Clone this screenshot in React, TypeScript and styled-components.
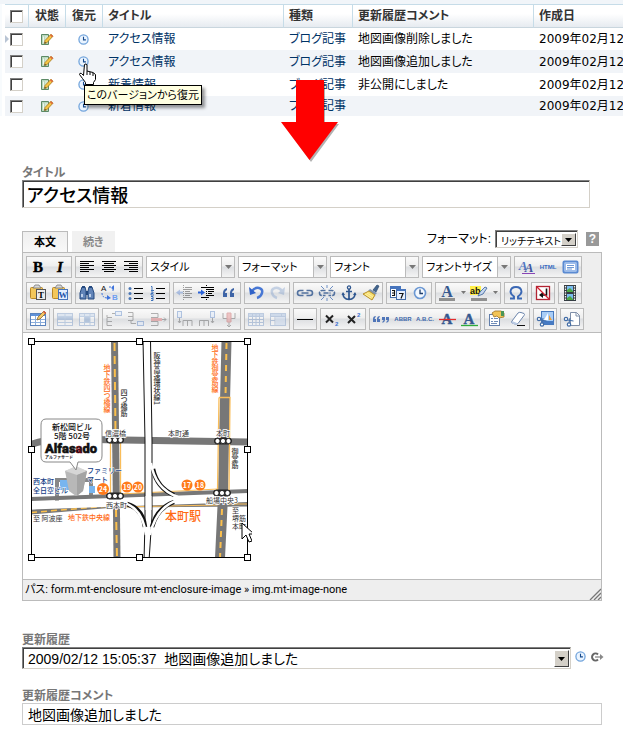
import React from "react";
import styled, { createGlobalStyle, css } from "styled-components";

const Global = createGlobalStyle`
  * { box-sizing: border-box; }
  body {
    margin: 0;
    background: #fff;
    color: #000;
    font-family: "Liberation Sans", "Noto Sans CJK JP", sans-serif;
    font-size: 12px;
    font-feature-settings: "palt";
  }
  button, input, select { font: inherit; font-feature-settings: inherit; color: inherit; margin: 0; }
  button { padding: 0; border: 0; background: none; cursor: pointer; }
`;

const Page = styled.div`
  overflow-x: hidden;
  padding-bottom: 20px;
`;

/* ---------- revision list ---------- */

const Listing = styled.section`
  position: relative;
  padding: 4px 0 0 5px;
  background:
    linear-gradient(#f1f5f9, #f1f5f9) top / 100% 4px no-repeat,
    linear-gradient(#f8fbfd, #f8fbfd) left / 2px 100% no-repeat;
`;

const Table = styled.table`
  width: 100%;
  table-layout: fixed;
  border-collapse: separate;
  border-spacing: 0;
  line-height: 16px;
  white-space: nowrap;
`;

const Col = styled.col<{ $w?: number }>`
  ${(p) => p.$w && css`width: ${p.$w}px;`}
`;

const Th = styled.th<{ $center?: boolean }>`
  height: 24px;
  padding: 0 0 0 5px;
  border-top: 1px solid #c6dce8;
  border-bottom: 1px solid #c9d6de;
  border-left: 1px solid #c6dce8;
  background: linear-gradient(#fff, #fff 40%, #e6ebf0);
  color: #333;
  font-weight: bold;
  text-align: ${(p) => (p.$center ? "center" : "left")};
  ${(p) => p.$center && css`padding: 0;`}
  &:first-child { border-left: 0; }
`;

const Tr = styled.tr`
  height: 23px;
  &:nth-child(even) { background: #f1f4f8; }
  &:first-child { height: 22px; }
  &:last-child { height: 20px; }
`;

const Td = styled.td<{ $center?: boolean; $date?: boolean }>`
  position: relative;
  padding: 0 0 0 ${(p) => (p.$center ? 0 : 6)}px;
  overflow: hidden;
  text-align: ${(p) => (p.$center ? "center" : "left")};
  ${(p) => p.$date && css`font-family: "DejaVu Sans", "Noto Sans CJK JP", sans-serif;`}
  svg { display: block; margin: 0 auto; }
`;

const Check = styled.input`
  appearance: none;
  display: block;
  width: 13px;
  height: 13px;
  margin: 0 auto;
  border: 1px solid;
  border-color: #808080 #d4d0c8 #d4d0c8 #808080;
  background: #fff;
  box-shadow: inset 1px 1px 0 #404040;
`;

const RowMark = styled.svg`
  position: absolute;
  left: 0;
  top: 7px;
`;

const Link = styled.a`
  color: #036;
  text-decoration: none;
`;

const IconButton = styled.button`
  display: block;
  margin: 0 auto;
`;

const Tooltip = styled.div`
  position: absolute;
  left: 84px;
  top: 85px;
  padding: 1px 2px;
  border: 1px solid #000;
  background: #ffffe1;
  box-shadow: 3px 3px 3px rgba(0, 0, 0, 0.4);
  font-size: 11px;
  line-height: 16px;
  white-space: nowrap;
`;

const Hand = styled.svg`
  position: absolute;
  left: 78px;
  top: 63px;
`;

const BigArrow = styled.svg`
  position: absolute;
  left: 276px;
  top: 75px;
`;

/* ---------- form ---------- */

const Form = styled.form`
  padding: 50px 21px 0 22px;
`;

const Label = styled.label`
  display: block;
  color: #777;
  font-weight: bold;
  line-height: 14px;
`;

const sunken = css`
  border: 1px solid;
  border-color: #808080 #d4d0c8 #d4d0c8 #808080;
  box-shadow: inset 1px 1px 0 #404040;
  background: #fff;
`;

const TitleBox = styled.div`
  padding-right: 12px;
`;

const TitleInput = styled.input`
  ${sunken}
  display: block;
  width: 100%;
  height: 28px;
  padding: 0 4px;
  font-size: 18px;
  font-weight: 500;
`;

const TabRow = styled.div`
  display: flex;
  align-items: flex-end;
  gap: 4px;
  margin-top: 22px;
  height: 22px;
`;

const Tab = styled.button<{ $active?: boolean }>`
  height: 21px;
  padding: 0 10px;
  border: 1px solid #f1f1f1;
  border-bottom: 0;
  background: #f1f1f1;
  color: #888;
  font-size: 11px;
  font-weight: bold;
  line-height: 20px;
  ${(p) => p.$active && css`
    padding: 0 11px;
    border-color: #bbb;
    background: linear-gradient(#efefef, #f8f8f8);
    color: #000;
  `}
`;

const FormatBox = styled.div`
  display: flex;
  align-items: center;
  gap: 4px;
  margin: 0 3px 4px auto;
  line-height: 18px;
`;

const SelectBox = styled.div<{ $w?: number }>`
  ${sunken}
  display: flex;
  align-items: center;
  padding: 2px 1px 1px 2px;
  ${(p) => (p.$w
    ? css`width: ${p.$w}px; height: 18px; font-size: 10px;`
    : css`flex: 1; height: 22px; font-size: 14px;`)}
`;

const BareSelect = styled.select`
  appearance: none;
  flex: 1;
  min-width: 0;
  height: 100%;
  padding: 0 0 0 3px;
  border: 0;
  background: transparent;
  outline: 0;
`;

const DropKnob = styled.span`
  display: flex;
  align-items: center;
  justify-content: center;
  width: 15px;
  height: 100%;
  border: 1px solid;
  border-color: #fff #404040 #404040 #fff;
  background: #d4d0c8;
  pointer-events: none;
`;

const Help = styled.button`
  width: 13px;
  height: 14px;
  margin-left: 4px;
  background: #999;
  color: #fff;
  font-weight: bold;
  line-height: 14px;
`;

const Editor = styled.div`
  border: 1px solid #bbb;
`;

const Toolbar = styled.div`
  display: flex;
  flex-direction: column;
  gap: 4px;
  padding: 3px 3px 2px;
  border-bottom: 1px solid #bbb;
  background: #eee;
`;

const ToolRow = styled.div`
  display: flex;
  gap: 3px;
`;

const raised = css`
  background: linear-gradient(#fafafa, #eee 45%, #dcdee1 50%, #f4f4f4);
`;

const Group = styled.div`
  ${raised}
  display: flex;
  height: 22px;
  border: 1px solid #bbb;
`;

const Tool = styled.button<{ $off?: boolean; $menu?: boolean }>`
  display: flex;
  align-items: center;
  justify-content: center;
  width: ${(p) => (p.$menu ? 32 : 22)}px;
  height: 20px;
  opacity: ${(p) => (p.$off ? 0.35 : 1)};
`;

const ToolSelect = styled.div`
  display: flex;
  width: 89px;
  height: 22px;
  border: 1px solid #bbb;
  background: #fff;
  font-size: 11px;
`;

const ToolKnob = styled.span`
  ${raised}
  display: flex;
  align-items: center;
  justify-content: center;
  width: 13px;
  border-left: 1px solid #bbb;
`;

const Canvas = styled.div`
  padding: 5px;
  height: 246px;
`;

const MapSvg = styled.svg`
  display: block;
  font-family: "Noto Sans CJK JP", sans-serif;
  font-feature-settings: normal;
`;

const Upright = styled.text`
  writing-mode: vertical-rl;
`;

const Status = styled.div`
  display: flex;
  justify-content: space-between;
  align-items: flex-end;
  padding-left: 2px;
  border-top: 1px solid #bbb;
  background: #eee;
  font-family: Roboto, "Noto Sans CJK JP", sans-serif;
  font-size: 11px;
  line-height: 20px;
`;

const Fields = styled.div`
  display: flex;
  flex-direction: column;
  gap: 20px;
  margin-top: 32px;
`;

const HistoryLine = styled.div`
  display: flex;
  align-items: center;
  gap: 4px;
  margin-right: -2px;
`;

const Comment = styled.input`
  display: block;
  width: 100%;
  height: 22px;
  padding: 0 5px;
  border: 1px solid #ccc;
  font-size: 14px;
`;

/* ---------- icons ---------- */

const Clock = () => (
  <svg width="11" height="11" viewBox="0 0 12 12">
    <circle cx="6" cy="6" r="5" fill="#eaf4ff" stroke="#72a4dc" strokeWidth="1.4" />
    <path d="M6 3v3.4h2.6" fill="none" stroke="#164a8c" strokeWidth="1.2" />
  </svg>
);

const Draft = () => (
  <svg width="14" height="13" viewBox="0 0 14 13">
    <path d="M1.5 1.500h7v10h-7z" fill="#b9d8be" stroke="#5c8a66" />
    <path d="M3.500 3.500v6M5 4h3M5 6h2" stroke="#eef8ee" />
    <path d="M4.500 10.500l.5-3L11 1.200l2 2L7 9.600z" fill="#f5c544" stroke="#a5761c" strokeWidth=".8" />
    <path d="M11 1.200l2 2-1 1-2-2z" fill="#e0603c" />
    <path d="M4.500 10.500l.4-1.600 1.200 1z" fill="#222" />
  </svg>
);

const Caret = ({ color = "#777" }: { color?: string }) => (
  <svg width="7" height="4" viewBox="0 0 7 4"><path d="M0 0h7L3.500 4z" fill={color} /></svg>
);

const Ico = ({ children }: { children: React.ReactNode }) => (
  <svg width="20" height="20" viewBox="0 0 20 20" fill="none">{children}</svg>
);

const glyph = (ch: string, color: string, extra?: React.ReactNode, italic = false) => (
  <Ico>
    <text x="10" y="15" fontFamily="Liberation Serif, serif" fontSize="15" fontWeight="bold" fontStyle={italic ? "italic" : "normal"} textAnchor="middle" fill={color} stroke={color} strokeWidth=".4">{ch}</text>
    {extra}
  </Ico>
);

const lines = (xs: number[][]) => (
  <Ico><path d={xs.map(([x, w], i) => `M${x} ${4.5 + i * 2}h${w}`).join("")} stroke="#000" /></Ico>
);

const small = (s: string, color: string) => (
  <Ico><text x="10" y="12" fontFamily="Liberation Sans, sans-serif" fontSize="6" fontWeight="bold" textAnchor="middle" fill={color}>{s}</text></Ico>
);

const clipboard = (letter: string) => (
  <Ico>
    <rect x="2.5" y="4.5" width="12" height="11" rx="1" fill="#f3c75a" stroke="#b98726" />
    <path d="M5 5l2-3h4l2 3z" fill="#d8d8d8" stroke="#777" strokeWidth=".8" />
    <rect x="8.5" y="6.5" width="9" height="10" fill={letter === "T" ? "#ececec" : "#e4efff"} stroke={letter === "T" ? "#555" : "#4775bb"} />
    <text x="13" y="15" fontFamily="Liberation Serif, serif" fontSize="9" fontWeight="bold" textAnchor="middle" fill={letter === "T" ? "#000" : "#2454a8"}>{letter}</text>
  </Ico>
);

const quoteMark = (x: number, y: number) => `M${x + 4} ${y - 3}q-4 1-4 5v4h4v-4h-2q0-2 2-3z`;
const closeMark = (x: number, y: number) => `M${x} ${y}h3v3q0 2-2.500 3v-1.500q1-.5 1-1.500h-1.500z`;

const grid = (cell: string) => (
  <>
    <rect x="2.5" y="4.5" width="15" height="12" fill="#fff" stroke="#5b83bd" />
    <path d="M3 5h14v2H3z" fill={cell} />
  </>
);

const chain = "M8.5 7.5H5a2.500 2.500 0 0 0 0 5h3.500M11.500 7.500H15a2.500 2.500 0 0 1 0 5h-3.500M6.500 10h7";

const scissors = (
  <>
    <circle cx="4" cy="10" r="1.7" fill="#fff" stroke="#426da7" strokeWidth="1.2" />
    <circle cx="7" cy="15.5" r="1.7" fill="#fff" stroke="#426da7" strokeWidth="1.2" />
    <path d="M5.500 11l6 1M7 14l1-5" stroke="#426da7" />
  </>
);

const icons: Record<string, React.ReactNode> = {
  bold: glyph("B", "#000"),
  italic: glyph("I", "#000", undefined, true),
  left: lines([[3, 14], [3, 9], [3, 14], [3, 9], [3, 14], [3, 9]]),
  center: lines([[3, 14], [5, 10], [3, 14], [5, 10], [3, 14], [5, 10]]),
  right: lines([[3, 14], [8, 9], [3, 14], [8, 9], [3, 14], [8, 9]]),
  styles: (
    <Ico>
      <g fontFamily="Liberation Serif, serif" fontWeight="bold" fontStyle="italic" textAnchor="middle">
        <text x="7" y="13" fontSize="13" fill="#5277c2">A</text>
        <text x="13" y="15" fontSize="13" fill="#3f559f">A</text>
      </g>
      <path d="M6 16.500h13" stroke="#8a45b5" />
    </Ico>
  ),
  html: small("HTML", "#3569c0"),
  full: (
    <Ico>
      <rect x="3.5" y="4.5" width="14" height="11" rx="1" fill="#dceafd" stroke="#5a8ad2" strokeWidth="2" />
      <rect x="5.5" y="6.5" width="10" height="7" fill="#fff" stroke="#9dbdec" />
      <path d="M7 8.500h7M7 10.500h7M7 12h5" stroke="#4d80ca" strokeWidth=".8" />
    </Ico>
  ),
  pasteText: clipboard("T"),
  pasteWord: clipboard("W"),
  find: (
    <Ico>
      <path d="M5 4h3l1 4v8H3v-6zM12 4h3l2 6v6h-6V8z" fill="#6184b8" stroke="#24497f" />
      <path d="M9 8h2v4H9z" fill="#24497f" />
      <path d="M5 11v3M13 11v3" stroke="#dce9fa" strokeWidth="1.5" />
      <path d="M5 4h3M12 4h3" stroke="#24497f" strokeWidth="2" />
    </Ico>
  ),
  replace: (
    <Ico>
      <text x="2" y="8" fontFamily="Liberation Sans, sans-serif" fontSize="8" fill="#111">A</text>
      <text x="13" y="17" fontFamily="Liberation Sans, sans-serif" fontSize="8" fontWeight="bold" fill="#6c9cf0">B</text>
      <path d="M3 10q0 5 6 5M10 4h4v5" stroke="#3d73dc" strokeDasharray="2 1" />
      <path d="M8 12l4 3-4 2zM12 5l3-3v5z" fill="#3d73dc" />
    </Ico>
  ),
  ul: <Ico><path d="M8 5.500h9M8 10.500h9M8 15.500h9" stroke="#000" /><circle cx="4" cy="5.5" r="1.5" fill="#4a76b5" /><circle cx="4" cy="10.5" r="1.5" fill="#4a76b5" /><circle cx="4" cy="15.5" r="1.5" fill="#4a76b5" /></Ico>,
  ol: (
    <Ico>
      <path d="M8 5.500h9M8 10.500h9M8 15.500h9" stroke="#000" />
      <path d="M3 3.500h1V7M3 7.500h3M3 9h2v1.500H3V12h3M3 13.500h2v2H3m2 0v2H3" stroke="#3e72ba" />
    </Ico>
  ),
  outdent: <Ico><path d="M10 4.500h7M8 6.500h9M10 8.500h5M10 10.500h7M10 12.500h5M8 14.500h9" stroke="#000" /><path d="M8.500 2v16" stroke="#000" strokeDasharray="1 1" /><path d="M1 9.500l4-3v2h3v2H5v2z" fill="#3b6fd0" /></Ico>,
  indent: <Ico><path d="M4 4.500h13M9 6.500h8M11 8.500h6M11 10.500h4M9 12.500h8M4 14.500h8" stroke="#000" /><path d="M9.500 2v16" stroke="#000" strokeDasharray="1 1" /><path d="M8 9.500l-4-3v2H1v2h3v2z" fill="#2a62d8" /></Ico>,
  quote: <Ico><path d={quoteMark(4, 8) + quoteMark(11, 8)} fill="#3c63a6" /></Ico>,
  undo: <Ico><path d="M6 8q3-4 7-3 4 1 3 5-1 4-5 5" stroke="#4777d4" strokeWidth="2.5" /><path d="M3 4l1 8 6-2z" fill="#2f62c8" /></Ico>,
  redo: <Ico><path d="M14 8q-3-4-7-3-4 1-3 5 1 4 5 5" stroke="#6f93c8" strokeWidth="2.5" /><path d="M17 4l-1 8-6-2z" fill="#6f93c8" /></Ico>,
  link: <Ico><path d={chain} stroke="#52719f" strokeWidth="1.6" /></Ico>,
  unlink: <Ico><path d={chain} stroke="#52719f" strokeWidth="1.6" strokeDasharray="5 1" /><path d="M4 3l3 3M10 2v3M16 3l-3 3M4 17l3-3M10 18v-3M16 17l-3-3" stroke="#6d8fc4" /></Ico>,
  anchor: <Ico><circle cx="10" cy="4.5" r="1.6" stroke="#2e568f" strokeWidth="1.3" /><path d="M10 6v10M7 8.500h6M4 10.500q0 5.500 6 6 6-.5 6-6" stroke="#2e568f" strokeWidth="1.7" /><path d="M2.500 12l1.500-3 2 3zM17.500 12L16 9l-2 3z" fill="#2e568f" /></Ico>,
  brush: <Ico><path d="M12 7l4-5 2 1-3 6z" fill="#44668f" stroke="#29476e" strokeWidth=".7" /><path d="M9 6l7 4-2 2-7-4z" fill="#8195ae" /><path d="M8 8l6 4-3 5-9-6z" fill="#f7df72" stroke="#b8902c" /><path d="M4 11l6 4M6 10l6 4" stroke="#fff1a5" /></Ico>,
  date: (
    <Ico>
      <rect x="2.5" y="3.5" width="10" height="11" fill="#fff" stroke="#456ca8" /><path d="M2 3h11v3H2z" fill="#4775bd" />
      <rect x="8.5" y="6.5" width="9" height="10" fill="#e7f0ff" stroke="#456ca8" /><path d="M8 6h10v2H8z" fill="#4775bd" />
      <path d="M4 7.500h2.500v5H4M4 10h2.500M11 10.500h4l-2 5" stroke="#111" strokeWidth="1.2" />
    </Ico>
  ),
  time: <Ico><circle cx="10" cy="10" r="5.5" fill="#f2f8ff" stroke="#6a97d3" strokeWidth="1.6" /><path d="M10 6.500V10.500h3" stroke="#1d3d6d" strokeWidth="1.3" /></Ico>,
  fore: (
    <svg width="30" height="20" viewBox="0 0 30 20">
      <text x="10" y="14" fontFamily="Liberation Serif, serif" fontSize="16" fontWeight="bold" textAnchor="middle" fill="#36588f">A</text>
      <path d="M2 15h16v3H2z" fill="#909090" /><path d="M24 8h5l-2.500 3z" fill="#777" />
    </svg>
  ),
  back: (
    <svg width="30" height="20" viewBox="0 0 30 20">
      <path d="M1 3h11v9H1z" fill="#fff04a" />
      <text x="1" y="11" fontFamily="Liberation Sans, sans-serif" fontSize="9" fontWeight="bold" fill="#111">ab</text>
      <path d="M9 13l2-4 5-5 2 1-4 6z" fill="#c5d7ef" stroke="#486da2" strokeWidth=".9" />
      <path d="M2 15h16v3H2z" fill="#909090" /><path d="M24 8h5l-2.500 3z" fill="#777" />
    </svg>
  ),
  omega: <Ico><path d="M4 15.500h4v-2Q4.500 11 4.500 8.500 5 4 10 4t5.500 4.500q0 2.500-3.500 5v2h4" stroke="#3b68b4" strokeWidth="1.9" /></Ico>,
  vis: <Ico><rect x="3.5" y="3.5" width="13" height="13" fill="#fff" stroke="#b22433" strokeWidth="1.3" /><path d="M13.500 5.500V12H9" stroke="#111" strokeWidth="1.6" /><path d="M10 9v6l-4-3z" fill="#111" /><path d="M4 4l12 12" stroke="#d32030" strokeWidth="1.3" /></Ico>,
  media: <Ico><path d="M4 2h12v16H4z" fill="#343c42" /><path d="M5.500 3v15M14.500 3v15" stroke="#eee" strokeWidth="1.3" strokeDasharray="1.5 1" /><path d="M7 3h6v6H7zM7 11h6v6H7z" fill="#79bcf0" /><path d="M7 7l3-2 3 3v1H7zM7 15l3-2 3 3v1H7z" fill="#4ca844" /></Ico>,
  table: <Ico>{grid("#5f91d8")}<path d="M3 10.500h14M3 13.500h14M7.500 7v9M12.500 7v9" stroke="#8caedc" /><path d="M9 11l1-3 6-6 2 2-6 6z" fill="#f1c867" stroke="#8d6830" strokeWidth=".8" /><path d="M16 2l2 2-1 1-2-2z" fill="#dd5645" /></Ico>,
  rowProps: <Ico>{grid("#bad0ef")}<path d="M3 8h14v3H3z" fill="#5e8bc9" /><path d="M3 7.500h14M3 13.500h14M10 5v11" stroke="#6f99cf" /></Ico>,
  cellProps: <Ico>{grid("#bad0ef")}<path d="M7 8h6v5H7z" fill="#5e8bc9" /><path d="M3 7.500h14M3 13.500h14M7.500 5v11M13 5v11" stroke="#6f99cf" /></Ico>,
  rowBefore: <Ico><path d="M8 8.500H3v8h5M3 12.500h5M3 8V6M8 4.500h5" stroke="#333" /><rect x="11.5" y="2.5" width="6" height="4" fill="#d7e7ff" stroke="#3269bc" /></Ico>,
  rowAfter: <Ico><path d="M2 3.500h5v8H2M2 7.500h5M5 12v2.500h5" stroke="#333" /><rect x="11.5" y="12.5" width="6" height="4" fill="#d7e7ff" stroke="#3269bc" /></Ico>,
  rowDel: <Ico><path d="M3 4.500h7v4H3M3 12.500h7v4H3M12 10.500h6m-2-2l2 2-2 2" stroke="#333" /><path d="M3 9h11v3H3z" fill="#e05252" /></Ico>,
  colBefore: <Ico><rect x="2.5" y="2.5" width="4" height="6" fill="#d7e7ff" stroke="#3269bc" /><path d="M4.500 9v5M3 12l1.500 2L6 12M8 17v-5.500h9V17M12.500 12v5" stroke="#333" /></Ico>,
  colAfter: <Ico><rect x="13.5" y="2.5" width="4" height="6" fill="#d7e7ff" stroke="#3269bc" /><path d="M15.500 9v5m-1.500-2l1.500 2 1.500-2M2.500 17v-5.500h9V17M7 12v5" stroke="#333" /></Ico>,
  colDel: <Ico><path d="M4 4v5.500h4M16 4v5.500h-4M10 13v5m-2-2l2 2 2-2" stroke="#333" /><path d="M8 4h4v9H8z" fill="#e57070" stroke="#b33" /></Ico>,
  split: <Ico>{grid("#8caede")}<path d="M3 7.500h14M3 10.500h14M3 13.500h14M6.500 5v11M10 5v11M13.500 5v11" stroke="#5b83bd" /></Ico>,
  merge: <Ico>{grid("#8caede")}<path d="M3 7.500h14M7 8v8M3 11.500h4M13.500 5v3" stroke="#5b83bd" /><path d="M8 8h9v8H8z" fill="#b8cff0" /></Ico>,
  hr: <Ico><path d="M2 10.500h16" stroke="#000" /></Ico>,
  sub: <Ico><path d="M4 6.500l7 7M11 6.500l-7 7" stroke="#222" strokeWidth="2" /><text x="13" y="17" fontFamily="Liberation Sans, sans-serif" fontSize="6" fontWeight="bold" fill="#3b6fd0">2</text></Ico>,
  sup: <Ico><path d="M4 7l7 7M11 7l-7 7" stroke="#222" strokeWidth="2" /><text x="13" y="8" fontFamily="Liberation Sans, sans-serif" fontSize="6" fontWeight="bold" fill="#3b6fd0">2</text></Ico>,
  cite: <Ico><path d={"M5 7q-3 0-3 3v3h3v-3H3.500zM9 7q-3 0-3 3v3h3v-3H7.500z" + closeMark(11, 8) + closeMark(15, 8)} fill="#4f75b8" /></Ico>,
  abbr: small("ABBR", "#3e68aa"),
  acronym: small("A.B.C.", "#3e68aa"),
  del: glyph("A", "#36588f", <path d="M2 10.500h17" stroke="#e32c2c" strokeWidth="1.3" />),
  ins: glyph("A", "#36588f", <path d="M2 16.500h17" stroke="#2fab3b" strokeWidth="1.3" />),
  attribs: <Ico><rect x="3.5" y="5.5" width="10" height="11" fill="#fff" stroke="#637fab" /><path d="M5 9.500h2M8 9.500h4M5 12.500h2M8 12.500h4M5 14.500h6" stroke="#6f8cb8" /><path d="M6 4l3-2h6l3 2v4l-5 1-2-2-3 1z" fill="#f2c457" stroke="#9d7125" strokeWidth=".8" /><path d="M15 2h3v5h-3z" fill="#4b9657" /></Ico>,
  eraser: <Ico><path d="M4 12l6-8q1-1 3-.5l3 1q1 1 0 2l-6 8q-1 1-3 .5l-3-1q-1-1 0-2z" fill="#fff" stroke="#6d86ad" /><path d="M4 12l5 2 1 1q-1 1-3 .5l-3-1q-1-1 0-2.500z" fill="#b9c9e2" /><path d="M9 16.500h8" stroke="#111" /></Ico>,
  cutImage: <Ico><rect x="6.5" y="2.5" width="12" height="13" fill="#a9cdf6" stroke="#4779be" /><path d="M7 12h11v3H7z" fill="#477bc4" /><path d="M13 4v7H9z" fill="#fff" /><path d="M14 6l3 5h-3z" fill="#ef9e37" />{scissors}</Ico>,
  cutPage: <Ico><path d="M8.500 3.500h6l3 3v10h-9z" fill="#fff" stroke="#7f8fa8" /><path d="M14 3.500v3.500h3.500" stroke="#7f8fa8" />{scissors}</Ico>,
};

const off = new Set(["outdent", "redo", "rowProps", "cellProps", "rowBefore", "rowAfter", "rowDel", "colBefore", "colAfter", "colDel", "split", "merge"]);

const Tools = ({ groups }: { groups: string[][] }) => (
  <>
    {groups.map((g) => (
      <Group key={g[0]}>
        {g.map((n) => (
          <Tool key={n} type="button" aria-label={n} $off={off.has(n)} $menu={n === "fore" || n === "back"}>{icons[n]}</Tool>
        ))}
      </Group>
    ))}
  </>
);

/* ---------- access map ---------- */

const Station = ({ x, y }: { x: number; y: number }) => (
  <g fill="#fff" stroke="#222">
    <rect x={x - 8.5} y={y - 3} width="17" height="6" rx="3" fill="#222" />
    <circle cx={x - 5.5} cy={y} r="2.6" /><circle cx={x} cy={y} r="2.6" /><circle cx={x + 5.5} cy={y} r="2.6" />
  </g>
);

const Exit = ({ x, y, n, r = 5.5 }: { x: number; y: number; n: string; r?: number }) => (
  <g>
    <circle cx={x} cy={y} r={r} fill="#ff7a1a" />
    <text x={x} y={y + 3} fontSize="7" fontWeight="bold" fill="#fff" textAnchor="middle">{n}</text>
  </g>
);

const handles = [[0, 0], [108, 0], [216, 0], [0, 108], [216, 108], [0, 216], [108, 216], [216, 216]];

const AccessMap = () => (
  <MapSvg width="224" height="224" viewBox="-3 -3 224 224" role="img" aria-label="地図">
    <clipPath id="frame"><path d="M0 0h217v217H0z" /></clipPath>
    <g clipPath="url(#frame)">
      <path d="M-4 105Q10 99 30 98L218 101" stroke="#777" strokeWidth="7" fill="none" />
      <path d="M26 160V139h34v16" stroke="#888" strokeWidth="4" fill="none" />
      <path d="M0 158L218 150" stroke="#777" strokeWidth="4" fill="none" />
      <path d="M0 171L84 164 218 163" stroke="#777" strokeWidth="5" fill="none" />
      <path d="M0 171.500L84 164.500" stroke="#fcc04d" strokeWidth="1.5" strokeDasharray="6 4" fill="none" />
      <path d="M89 153L187 148M89 166L187 164M194 163h22" stroke="#f9bd5a" fill="none" />
      <path d="M83.500 0L86 217" stroke="#777" strokeWidth="7" fill="none" />
      <path d="M83.500 2L84.500 92M85 168L86 217" stroke="#fcc04d" strokeWidth="2" strokeDasharray="8 5" fill="none" />
      <path d="M79.500 102V152M89.500 102V152" stroke="#f9bd5a" strokeWidth="1.3" />
      <path d="M195.500 0L193 100 192 155 189 217" stroke="#777" strokeWidth="10" fill="none" />
      <path d="M195.500 2L194.500 56M191 168L189 217" stroke="#fcc04d" strokeWidth="2" strokeDasharray="6 5" fill="none" />
      <path d="M188 56.500h11L198 150M188 56.500L186.500 150" stroke="#f9bd5a" strokeWidth="1.3" fill="none" />
      <path d="M0 164.500L218 157" stroke="#fff" strokeWidth="8" />
      <path d="M112 -2L114 100V180L113 220H118L121 175V100L119.500 -2" fill="#fff" stroke="#111" />
      <g fill="none">
        <path d="M122 128Q126 147 143 154M96 163Q112 168 114 186M143 161Q126 167 121 186" stroke="#111" strokeWidth="4.5" />
        <path d="M120 122Q124 148 147 156M90 161Q112 166 115 194M147 159Q125 166 119 194" stroke="#fff" strokeWidth="2.5" />
      </g>
      <path d="M114.500 155h6v14h-6z" fill="#fff" />
    </g>
    <Station x={84} y={99} /><Station x={192} y={100} /><Station x={84} y={155} /><Station x={191} y={152} />

    <path d="M29 139h9v10h-9zM58 145h6v7h-6z" fill="#78b5ef" />
    <path d="M34 130l11-4 11 4-4 20-7 5-7-5z" fill="#b8b8b8" />
    <path d="M34 130l12 4 10-4-11-5z" fill="#d6d6d6" />
    <path d="M46 134v21l6-5 4-20z" fill="#a4a4a4" />
    <path d="M15 78h50q6 0 6 6v31q0 6-6 6H47l-2 8-6-8H15q-5 0-5-6V84q0-6 5-6z" fill="#fff" stroke="#888" />
    <g fill="#111" textAnchor="middle">
      <text x="41" y="89" fontSize="8" fontWeight="500">新松岡ビル</text>
      <text x="41" y="98" fontSize="8" fontWeight="500">5階 502号</text>
      <text x="40" y="112" fontFamily="Roboto, sans-serif" fontWeight="900" fontSize="13" stroke="#111" strokeWidth=".5">Alfas<tspan stroke="#8c0010">a</tspan>do</text>
      <text x="28" y="118" fontSize="4" fontWeight="bold">アルファサード</text>
    </g>
    <g fill="#163f87" fontWeight="500" stroke="#fff" strokeWidth="1" paintOrder="stroke">
      <text x="2" y="143" fontSize="7">西本町</text><text x="2" y="152" fontSize="7">全日空ビル</text>
      <text x="56" y="132" fontSize="7">ファミリー</text><text x="56" y="141" fontSize="7">マート</text>
    </g>
    <Exit x={72} y={148} n="24" r={6} /><Exit x={96} y={146} n="19" /><Exit x={107} y={146} n="20" /><Exit x={156} y={144} n="17" /><Exit x={169} y={144} n="18" />
    <g fontSize="7" fill="#333" stroke="#fff" strokeWidth="1.5" paintOrder="stroke">
      <text x="74" y="95">信濃橋</text><text x="137" y="95">本町通</text><text x="185" y="95">本町</text>
      <text x="75" y="167">西本町</text><text x="175" y="162">船場中央3</text><text x="2" y="180">至 阿波座</text>
      <text x="201" y="172">至</text><text x="201" y="180">堺筋</text><text x="201" y="188">本町</text>
    </g>
    <g fill="#ff6a13">
      <text x="37" y="179" fontSize="7" fontWeight="500">地下鉄中央線</text>
      <text x="134" y="180" fontSize="12" fontWeight="500">本町駅</text>
      <Upright x="76" y="23" fontSize="7" fontWeight="500">地下鉄四つ橋線</Upright>
      <Upright x="184" y="3" fontSize="7" fontWeight="500">地下鉄御堂筋線</Upright>
    </g>
    <g fill="#333" fontSize="7" fontWeight="500">
      <Upright x="93" y="48">四つ橋筋</Upright><Upright x="126" y="11">阪神高速環状線1</Upright><Upright x="204" y="107">御堂筋</Upright>
    </g>

    <rect x="0.5" y="0.5" width="216" height="216" fill="none" stroke="#000" />
    {handles.map(([x, y]) => <rect key={`${x}-${y}`} x={x - 2.5} y={y - 2.5} width="6" height="6" fill="#fff" stroke="#000" />)}
    <path d="M211 182v16l4-4 3 7 3-1-3-7h5z" fill="#fff" stroke="#000" />
  </MapSvg>
);

/* ---------- page ---------- */

const rows = [
  ["アクセス情報", "地図画像削除しました"],
  ["アクセス情報", "地図画像追加しました"],
  ["新着情報", "非公開にしました"],
  ["新着情報", ""],
];

const StyleSelect = ({ label }: { label: string }) => (
  <ToolSelect>
    <BareSelect aria-label={label}><option>{label}</option></BareSelect>
    <ToolKnob><Caret /></ToolKnob>
  </ToolSelect>
);

export default function App() {
  return (
    <Page>
      <Global />
      <Listing>
        <Table>
          <colgroup>
            <Col $w={23} /><Col $w={37} /><Col $w={37} /><Col $w={181} /><Col $w={69} /><Col $w={181} /><Col />
          </colgroup>
          <thead>
            <tr>
              <Th $center><Check type="checkbox" aria-label="すべて選択" /></Th>
              <Th $center>状態</Th><Th $center>復元</Th><Th>タイトル</Th><Th>種類</Th><Th>更新履歴コメント</Th><Th>作成日</Th>
            </tr>
          </thead>
          <tbody>
            {rows.map(([title, note], i) => (
              <Tr key={i}>
                <Td $center>
                  {i === 0 && <RowMark width="4" height="8" viewBox="0 0 4 8"><path d="M0 0l4 4-4 4z" fill="#b8c4d4" /></RowMark>}
                  <Check type="checkbox" aria-label={title} />
                </Td>
                <Td $center><Draft /></Td>
                <Td $center><IconButton type="button" aria-label="このバージョンから復元"><Clock /></IconButton></Td>
                <Td><Link href="#">{title}</Link></Td>
                <Td><Link href="#">ブログ記事</Link></Td>
                <Td>{note}</Td>
                <Td $date>2009年02月12</Td>
              </Tr>
            ))}
          </tbody>
        </Table>
        <Tooltip role="tooltip">このバージョンから復元</Tooltip>
        <Hand width="19" height="23" viewBox="0 0 19 23">
          <path d="M6.500 1.500q2-1.500 2.500.5v6l2 .5 2 .5 2 .5 2.500 2v5l-2 3v2h-8v-2l-3-4-3-4q0-2 2-1l2 2z" fill="#fff" stroke="#000" />
          <path d="M9 8v4M12 9v3M15 10v3" stroke="#000" />
        </Hand>
        <BigArrow width="70" height="92" viewBox="0 0 70 92">
          <path d="M21 7h28v42h14L35 87 7 49h14z" fill="#000" opacity=".3" />
          <path d="M20 5h28v42h14L33.500 85 5 47h15z" fill="#f00" />
        </BigArrow>
      </Listing>

      <Form onSubmit={(e) => e.preventDefault()}>
        <TitleBox>
          <Label htmlFor="title">タイトル</Label>
          <TitleInput id="title" defaultValue="アクセス情報" />
        </TitleBox>

        <TabRow>
          <Tab type="button" $active>本文</Tab>
          <Tab type="button">続き</Tab>
          <FormatBox>
            <label htmlFor="format">フォーマット:</label>
            <SelectBox $w={83}>
              <BareSelect id="format"><option>リッチテキスト</option></BareSelect>
              <DropKnob><Caret color="#000" /></DropKnob>
            </SelectBox>
            <Help type="button">?</Help>
          </FormatBox>
        </TabRow>

        <Editor>
          <Toolbar>
            <ToolRow>
              <Tools groups={[["bold", "italic"], ["left", "center", "right"]]} />
              <StyleSelect label="スタイル" /><StyleSelect label="フォーマット" /><StyleSelect label="フォント" /><StyleSelect label="フォントサイズ" />
              <Tools groups={[["styles", "html", "full"]]} />
            </ToolRow>
            <ToolRow>
              <Tools groups={[["pasteText", "pasteWord"], ["find", "replace"], ["ul", "ol"], ["outdent", "indent", "quote"], ["undo", "redo"], ["link", "unlink", "anchor", "brush"], ["date", "time"], ["fore", "back"], ["omega"], ["vis"], ["media"]]} />
            </ToolRow>
            <ToolRow>
              <Tools groups={[["table"], ["rowProps", "cellProps"], ["rowBefore", "rowAfter", "rowDel"], ["colBefore", "colAfter", "colDel"], ["split", "merge"], ["hr"], ["sub", "sup"], ["cite", "abbr", "acronym", "del", "ins"], ["attribs", "eraser"], ["cutImage"], ["cutPage"]]} />
            </ToolRow>
          </Toolbar>
          <Canvas><AccessMap /></Canvas>
          <Status>
            <span>パス: form.mt-enclosure mt-enclosure-image » img.mt-image-none</span>
            <svg width="12" height="12" viewBox="0 0 12 12"><path d="M1 12L12 1M5 12l7-7M9 12l3-3" stroke="#777" strokeWidth="1.3" /></svg>
          </Status>
        </Editor>

        <Fields>
          <div>
            <Label htmlFor="history">更新履歴</Label>
            <HistoryLine>
              <SelectBox>
                <BareSelect id="history"><option>2009/02/12 15:05:37&nbsp; 地図画像追加しました</option></BareSelect>
                <DropKnob><Caret color="#000" /></DropKnob>
              </SelectBox>
              <IconButton type="button" aria-label="復元"><Clock /></IconButton>
              <IconButton type="button" aria-label="開く">
                <svg width="14" height="10" viewBox="0 0 14 10">
                  <path d="M8 2.500A3.500 3.500 0 1 0 8 7.500" fill="none" stroke="#666" strokeWidth="2" />
                  <path d="M5 5h6" stroke="#888" strokeWidth="1.3" /><path d="M10 2l3.500 3L10 8z" fill="#888" />
                </svg>
              </IconButton>
            </HistoryLine>
          </div>
          <div>
            <Label htmlFor="comment">更新履歴コメント</Label>
            <Comment id="comment" defaultValue="地図画像追加しました" />
          </div>
        </Fields>
      </Form>
    </Page>
  );
}
